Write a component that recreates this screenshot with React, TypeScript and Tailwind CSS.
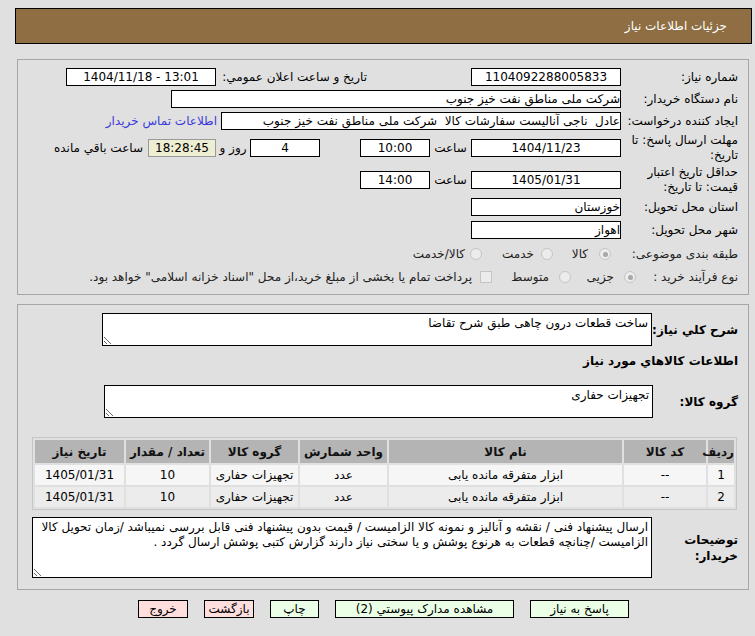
import type { ReactNode } from 'react'

const font = { fontFamily: '"DejaVu Sans", Tahoma, sans-serif' }

function Box({ w, children, className = '' }: { w: string; children?: ReactNode; className?: string }) {
  return (
    <div className={`${w} h-[18px] border border-black bg-white flex items-center justify-center text-[12px] leading-none whitespace-nowrap overflow-hidden ${className}`}>
      {children}
    </div>
  )
}

function Radio({ checked }: { checked?: boolean }) {
  return (
    <span className="w-[12px] h-[12px] rounded-full border border-[#c4c4c4] bg-[#ececec] flex items-center justify-center shrink-0">
      {checked && <span className="w-[5px] h-[5px] rounded-full bg-[#a8a8a8]" />}
    </span>
  )
}

function Label({ w, children, className = '' }: { w: string; children: ReactNode; className?: string }) {
  return <div className={`${w} shrink-0 pr-[10px] text-[12px] leading-[15px] ${className}`}>{children}</div>
}

const cols = [
  { title: 'ردیف', w: 'w-[26px]' },
  { title: 'کد کالا', w: 'w-[82px]' },
  { title: 'نام کالا', w: 'w-[233px]' },
  { title: 'واحد شمارش', w: 'w-[87px]' },
  { title: 'گروه کالا', w: 'w-[87px]' },
  { title: 'تعداد / مقدار', w: 'w-[83px]' },
  { title: 'تاریخ نیاز', w: 'w-[89px]' },
]

const rows = [
  ['1', '--', 'ابزار متفرقه مانده یابی', 'عدد', 'تجهیزات حفاری', '10', '1405/01/31'],
  ['2', '--', 'ابزار متفرقه مانده یابی', 'عدد', 'تجهیزات حفاری', '10', '1405/01/31'],
]

export default function App() {
  return (
    <div dir="rtl" style={font} className="w-[755px] h-[636px] bg-[#e0e0e0] text-black pt-[8px] overflow-hidden">
      <div className="h-[36px] mr-[3px] ml-[15px] border border-black bg-[#8e6e42] flex items-center pr-[24px] text-white text-[12px]">
        جزئیات اطلاعات نیاز
      </div>

      {/* main details */}
      <div className="mt-[15px] mr-[6px] ml-[17px] border border-[#a6a6a6] pt-[6px] pb-[6px]">
        <div className="h-[22px] flex items-center">
          <Label w="w-[127px]">شماره نیاز:</Label>
          <Box w="w-[150px]">1104092288005833</Box>
          <div className="w-[255px] pr-[104px] text-[12px] whitespace-nowrap">تاریخ و ساعت اعلان عمومي:</div>
          <Box w="w-[150px]"><span dir="ltr">1404/11/18 - 13:01</span></Box>
        </div>
        <div className="h-[22px] flex items-center">
          <Label w="w-[127px]">نام دستگاه خریدار:</Label>
          <Box w="w-[450px]" className="!justify-start">شرکت ملی مناطق نفت خیز جنوب</Box>
        </div>
        <div className="h-[22px] flex items-center">
          <Label w="w-[127px]" className="whitespace-nowrap">ایجاد کننده درخواست:</Label>
          <Box w="w-[400px]" className="!justify-start">عادل&nbsp; ناجی آنالیست سفارشات کالا&nbsp; شرکت ملی مناطق نفت خیز جنوب</Box>
          <span className="mr-[4px] text-[12px] text-[#3a3adb] whitespace-nowrap">اطلاعات تماس خریدار</span>
        </div>
        <div className="h-[32px] flex items-center">
          <Label w="w-[127px]">مهلت ارسال پاسخ: تا<br />تاریخ:</Label>
          <Box w="w-[150px]">1404/11/23</Box>
          <div className="w-[41px] text-center text-[12px]">ساعت</div>
          <Box w="w-[70px]">10:00</Box>
          <div className="w-[40px]" />
          <Box w="w-[70px]">4</Box>
          <div className="w-[34px] text-center text-[12px] whitespace-nowrap">روز و</div>
          <Box w="w-[68px]" className="!bg-[#eeeed2] !border-[#9a9a9a]">18:28:45</Box>
          <span className="mr-[5px] text-[12px] whitespace-nowrap">ساعت باقي مانده</span>
        </div>
        <div className="h-[32px] flex items-center">
          <Label w="w-[127px]">حداقل تاریخ اعتبار<br />قیمت: تا تاریخ:</Label>
          <Box w="w-[150px]">1405/01/31</Box>
          <div className="w-[41px] text-center text-[12px]">ساعت</div>
          <Box w="w-[70px]">14:00</Box>
        </div>
        <div className="h-[22px] flex items-center">
          <Label w="w-[127px]">استان محل تحویل:</Label>
          <Box w="w-[150px]" className="!justify-start">خوزستان</Box>
        </div>
        <div className="h-[24px] flex items-center">
          <Label w="w-[127px]">شهر محل تحویل:</Label>
          <Box w="w-[150px]" className="!justify-start">اهواز</Box>
        </div>
        <div className="h-[24px] flex items-center text-[12px] text-[#222]">
          <Label w="w-[137px]" className="whitespace-nowrap">طبقه بندی موضوعی:</Label>
          <div className="w-[58px] flex items-center gap-[11px]"><Radio checked /><span>کالا</span></div>
          <div className="w-[71px] flex items-center gap-[7px]"><Radio /><span>خدمت</span></div>
          <div className="flex items-center gap-[5px]"><Radio /><span>کالا/خدمت</span></div>
        </div>
        <div className="h-[22px] flex items-center text-[12px] text-[#222]">
          <Label w="w-[112px]" className="whitespace-nowrap">نوع فرآیند خرید :</Label>
          <div className="w-[65px] flex items-center gap-[10px]"><Radio checked /><span>جزیی</span></div>
          <div className="w-[79px] flex items-center gap-[10px]"><Radio /><span>متوسط</span></div>
          <span className="w-[12px] h-[12px] border border-[#c4c4c4] bg-[#ececec] shrink-0" />
          <span className="mr-[8px] whitespace-nowrap">پرداخت تمام یا بخشی از مبلغ خرید،از محل "اسناد خزانه اسلامی" خواهد بود.</span>
        </div>
      </div>

      {/* items */}
      <div className="mt-[9px] mr-[6px] ml-[17px] border border-[#a6a6a6] pt-[8px] pb-[11px]">
        <div className="h-[33px] flex items-center">
          <div className="w-[96px] pr-[10px] text-[12px] font-bold">شرح کلي نیاز:</div>
          <textarea readOnly dir="rtl" value="ساخت قطعات درون چاهی طبق شرح تقاضا" className="w-[550px] h-[33px] border border-black bg-white text-[12px] leading-[15px] px-[3px] py-[2px] outline-none" style={font} />
        </div>
        <div className="h-[30px] flex items-center pr-[10px] text-[12px] font-bold">اطلاعات کالاهاي مورد نیاز</div>
        <div className="mt-[9px] h-[33px] flex items-center">
          <div className="w-[95px] pr-[10px] text-[12px] font-bold">گروه کالا:</div>
          <textarea readOnly dir="rtl" value="تجهیزات حفاری" className="w-[549px] h-[33px] border border-black bg-white text-[12px] leading-[15px] px-[3px] py-[2px] outline-none" style={font} />
        </div>
        <table className="mt-[19px] mr-[11px] w-[705px] table-fixed border-separate border-spacing-[2px] border border-[#c6c6c6] text-[12px]">
          <thead>
            <tr>
              {cols.map(c => (
                <th key={c.title} className={`${c.w} h-[23px] bg-[#b4b4b4] font-bold text-[#111] text-center whitespace-nowrap p-0`}>{c.title}</th>
              ))}
            </tr>
          </thead>
          <tbody>
            {rows.map((r, i) => (
              <tr key={i} className={i === 0 ? 'bg-[#f6f6f6]' : 'bg-[#ececec]'}>
                {r.map((v, j) => (
                  <td key={j} className="h-[20px] text-center p-0 whitespace-nowrap">{v}</td>
                ))}
              </tr>
            ))}
          </tbody>
        </table>
        <div className="mt-[7px] h-[61px] flex items-center">
          <div className="w-[96px] pr-[10px] text-[12px] font-bold leading-[16px]">توضیحات<br />خریدار:</div>
          <textarea
            readOnly
            dir="rtl"
            value={'ارسال پیشنهاد فنی / نقشه و آنالیز و نمونه کالا الزامیست / قیمت بدون پیشنهاد فنی قابل بررسی نمیباشد /زمان تحویل کالا الزامیست /چنانچه قطعات به هرنوع پوشش و یا سختی نیاز دارند گزارش کتبی پوشش ارسال گردد .'}
            className="w-[620px] h-[61px] border border-black bg-white text-[12px] leading-[15px] px-[3px] py-[2px] outline-none"
            style={font}
          />
        </div>
      </div>

      <div className="mt-[10px] mr-[126px] flex gap-[16px] text-[12px]">
        <button className="w-[99px] h-[18px] border border-black bg-[#eaffe6] leading-none" style={font}>پاسخ به نیاز</button>
        <button className="w-[179px] h-[18px] border border-black bg-[#eaffe6] leading-none" style={font}>مشاهده مدارک پیوستي (2)</button>
        <button className="w-[49px] h-[18px] border border-black bg-[#eaffe6] leading-none" style={font}>چاپ</button>
        <button className="w-[50px] h-[18px] border border-black bg-[#ffdede] leading-none" style={font}>بازگشت</button>
        <button className="w-[50px] h-[18px] border border-black bg-[#ffdede] leading-none" style={font}>خروج</button>
      </div>
    </div>
  )
}
